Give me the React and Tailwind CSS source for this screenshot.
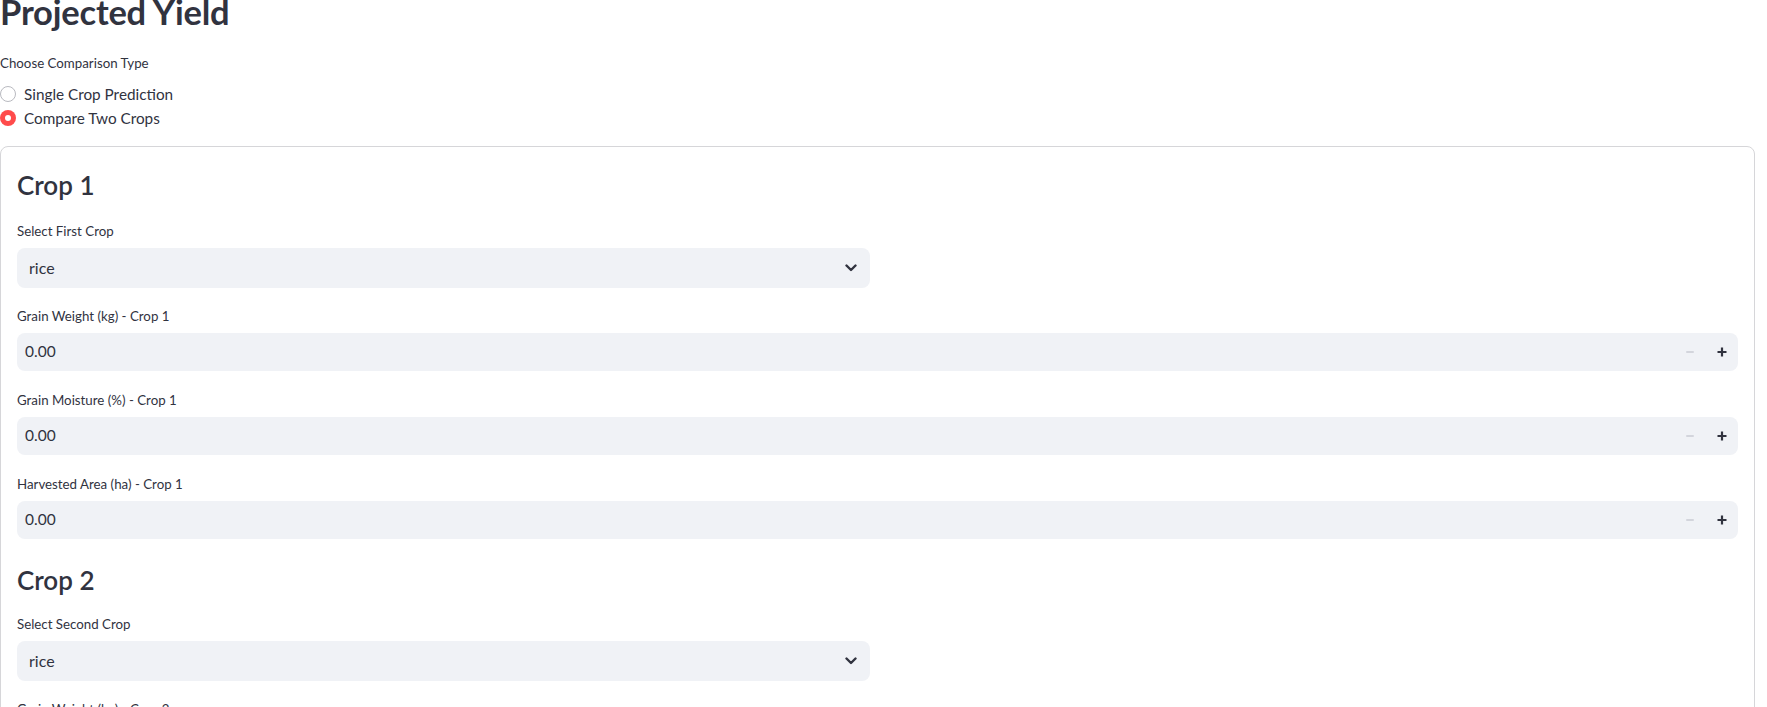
import { useState } from "react";

const fieldBg = "bg-[#f0f2f6]";

function Label({ children }) {
  return <p className="mb-[7px] text-[13.3px] leading-[20px] text-[#31333f]">{children}</p>;
}

function Chevron() {
  return (
    <svg width="12" height="8" viewBox="0 0 12 8" fill="none">
      <path d="M1.5 1.5 6 6l4.5-4.5" stroke="#31333f" strokeWidth="2.4" strokeLinecap="round" strokeLinejoin="round" />
    </svg>
  );
}

function SelectBox({ label, value }) {
  return (
    <div>
      <Label>{label}</Label>
      <div className={`flex h-[40px] w-[853px] items-center justify-between rounded-[8px] ${fieldBg} pl-[12px] pr-[13px]`}>
        <span className="text-[16px] text-[#31333f]">{value}</span>
        <Chevron />
      </div>
    </div>
  );
}

function NumberInput({ label, className = "" }) {
  const [value, setValue] = useState(0);
  return (
    <div className={className}>
      <Label>{label}</Label>
      <div className={`flex h-[38px] items-center rounded-[8px] ${fieldBg}`}>
        <span className="flex-1 pl-[8px] text-[15.5px] text-[#31333f]">{value.toFixed(2)}</span>
        <button className="flex h-full w-[32px] items-center justify-center" disabled={value <= 0} onClick={() => setValue((v) => Math.max(0, v - 0.01))}>
          <span className="block h-[2px] w-[8px] rounded-full bg-[#d3d5dc]" />
        </button>
        <button className="flex h-full w-[32px] items-center justify-center" onClick={() => setValue((v) => v + 0.01)}>
          <svg width="10" height="10" viewBox="0 0 10 10">
            <path d="M5 0.5v9M0.5 5h9" stroke="#31333f" strokeWidth="2.2" />
          </svg>
        </button>
      </div>
    </div>
  );
}

function Radio({ checked, label, onClick }) {
  return (
    <button onClick={onClick} className="flex h-[24px] items-center gap-[8px] text-left">
      {checked ? (
        <span className="flex h-[16px] w-[16px] items-center justify-center rounded-full bg-[#ff4b4b]">
          <span className="h-[6px] w-[6px] rounded-full bg-white" />
        </span>
      ) : (
        <span className="h-[16px] w-[16px] rounded-full border border-[#b9bac0] bg-white" />
      )}
      <span className="text-[15.3px] text-[#31333f]">{label}</span>
    </button>
  );
}

function CropSection({ n, selectLabel, fieldsTop = "mt-[19px]" }) {
  return (
    <div className="flex flex-col">
      <h3 className="text-[26px] font-semibold leading-[34px] text-[#31333f]">Crop {n}</h3>
      <div className={`${fieldsTop} flex flex-col`}>
        <SelectBox label={selectLabel} value="rice" />
        <NumberInput className="mt-[18px]" label={`Grain Weight (kg) - Crop ${n}`} />
        <NumberInput className="mt-[19px]" label={`Grain Moisture (%) - Crop ${n}`} />
        <NumberInput className="mt-[19px]" label={`Harvested Area (ha) - Crop ${n}`} />
      </div>
    </div>
  );
}

export default function App() {
  const [mode, setMode] = useState("compare");

  return (
    <div className="min-h-screen overflow-hidden bg-white pr-[12px] font-['Lato','Liberation_Sans',sans-serif] text-[#31333f]">
      <h1 className="-mt-[8px] text-[34.5px] font-bold leading-[40px] tracking-[-0.2px]">Projected Yield</h1>
      <p className="mt-[21px] text-[13.3px] leading-[20px]">Choose Comparison Type</p>
      <div className="mt-[9px] flex flex-col items-start">
        <Radio checked={mode === "single"} label="Single Crop Prediction" onClick={() => setMode("single")} />
        <Radio checked={mode === "compare"} label="Compare Two Crops" onClick={() => setMode("compare")} />
      </div>
      <div className="mt-[16px] rounded-[8px] border border-[#d6d6d9] px-[16px] pt-[21px] pb-[24px]">
        <CropSection n={1} selectLabel="Select First Crop" />
        <div className="mt-[24px]">
          <CropSection n={2} selectLabel="Select Second Crop" fieldsTop="mt-[17px]" />
        </div>
      </div>
    </div>
  );
}
